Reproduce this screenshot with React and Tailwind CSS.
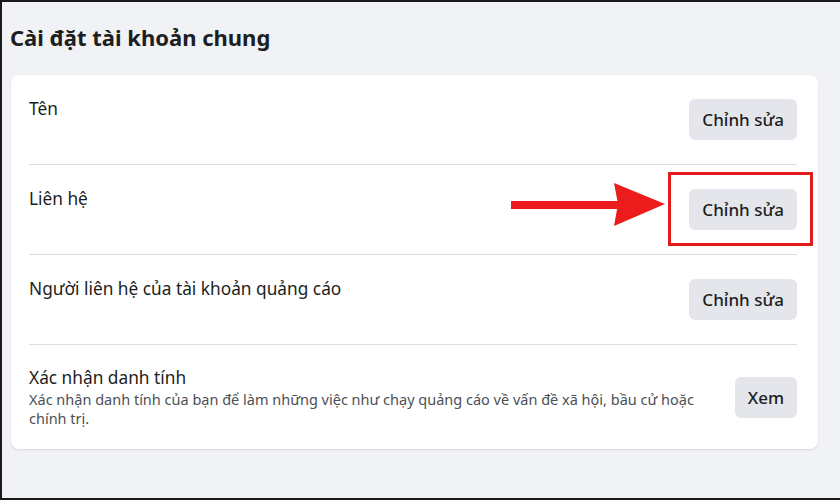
import React from "react";

const rows = [
  { title: "Tên", action: "Chỉnh sửa" },
  { title: "Liên hệ", action: "Chỉnh sửa" },
  { title: "Người liên hệ của tài khoản quảng cáo", action: "Chỉnh sửa" },
];

const EditButton = ({ label }) => {
  return (
    <button className="h-[41px] px-[13px] rounded-md bg-[#e4e6eb] text-[17px] font-medium text-[#1c1e21] shrink-0">
      {label}
    </button>
  );
};

const App = () => {
  return (
    <div className="relative w-[840px] h-[500px] bg-[#f0f2f5] overflow-hidden font-['Noto_Sans',sans-serif] text-[#1c1e21]">
      {/* Title */}
      <h1 className="pl-[10px] pt-[23px] text-[22px] leading-[29px] font-bold">Cài đặt tài khoản chung</h1>

      {/* Card */}
      <div className="mt-[23px] ml-[11px] w-[807px] bg-white rounded-lg shadow-[0_1px_2px_rgba(0,0,0,0.12)] pl-[18px] pr-[21px]">
        {rows.map((row, i) => (
          <div key={i} className="flex items-start justify-between py-6 border-b border-[#dadde1] h-[90px]">
            <div className="text-[17.3px] leading-[20px]">{row.title}</div>
            <EditButton label={row.action} />
          </div>
        ))}
        <div className="flex items-center justify-between pt-[22px] pb-[21px]">
          <div className="w-[690px]">
            <div className="text-[17.3px] leading-[21px]">Xác nhận danh tính</div>
            <div className="text-[14.5px] leading-[19px] text-[#4b4f56] pt-[2px]">
              Xác nhận danh tính của bạn để làm những việc như chạy quảng cáo về vấn đề xã hội, bầu cử hoặc chính trị.
            </div>
          </div>
          <EditButton label="Xem" />
        </div>
      </div>

      {/* Annotation: red box and arrow */}
      <div className="absolute left-[668px] top-[172px] w-[145px] h-[74px] border-[3px] border-[#e21b1b] pointer-events-none" />
      <svg className="absolute left-0 top-0 pointer-events-none" width="840" height="500">
        <rect x="511" y="201" width="108" height="8" fill="#ec1c1c" />
        <polygon points="614,183 665,204 614,226 618,204" fill="#ec1c1c" />
      </svg>

      {/* Screenshot frame */}
      <div className="absolute inset-0 border-l-2 border-t-2 border-b-2 border-[#1a1a1a] pointer-events-none" />
    </div>
  );
};

export default App;
